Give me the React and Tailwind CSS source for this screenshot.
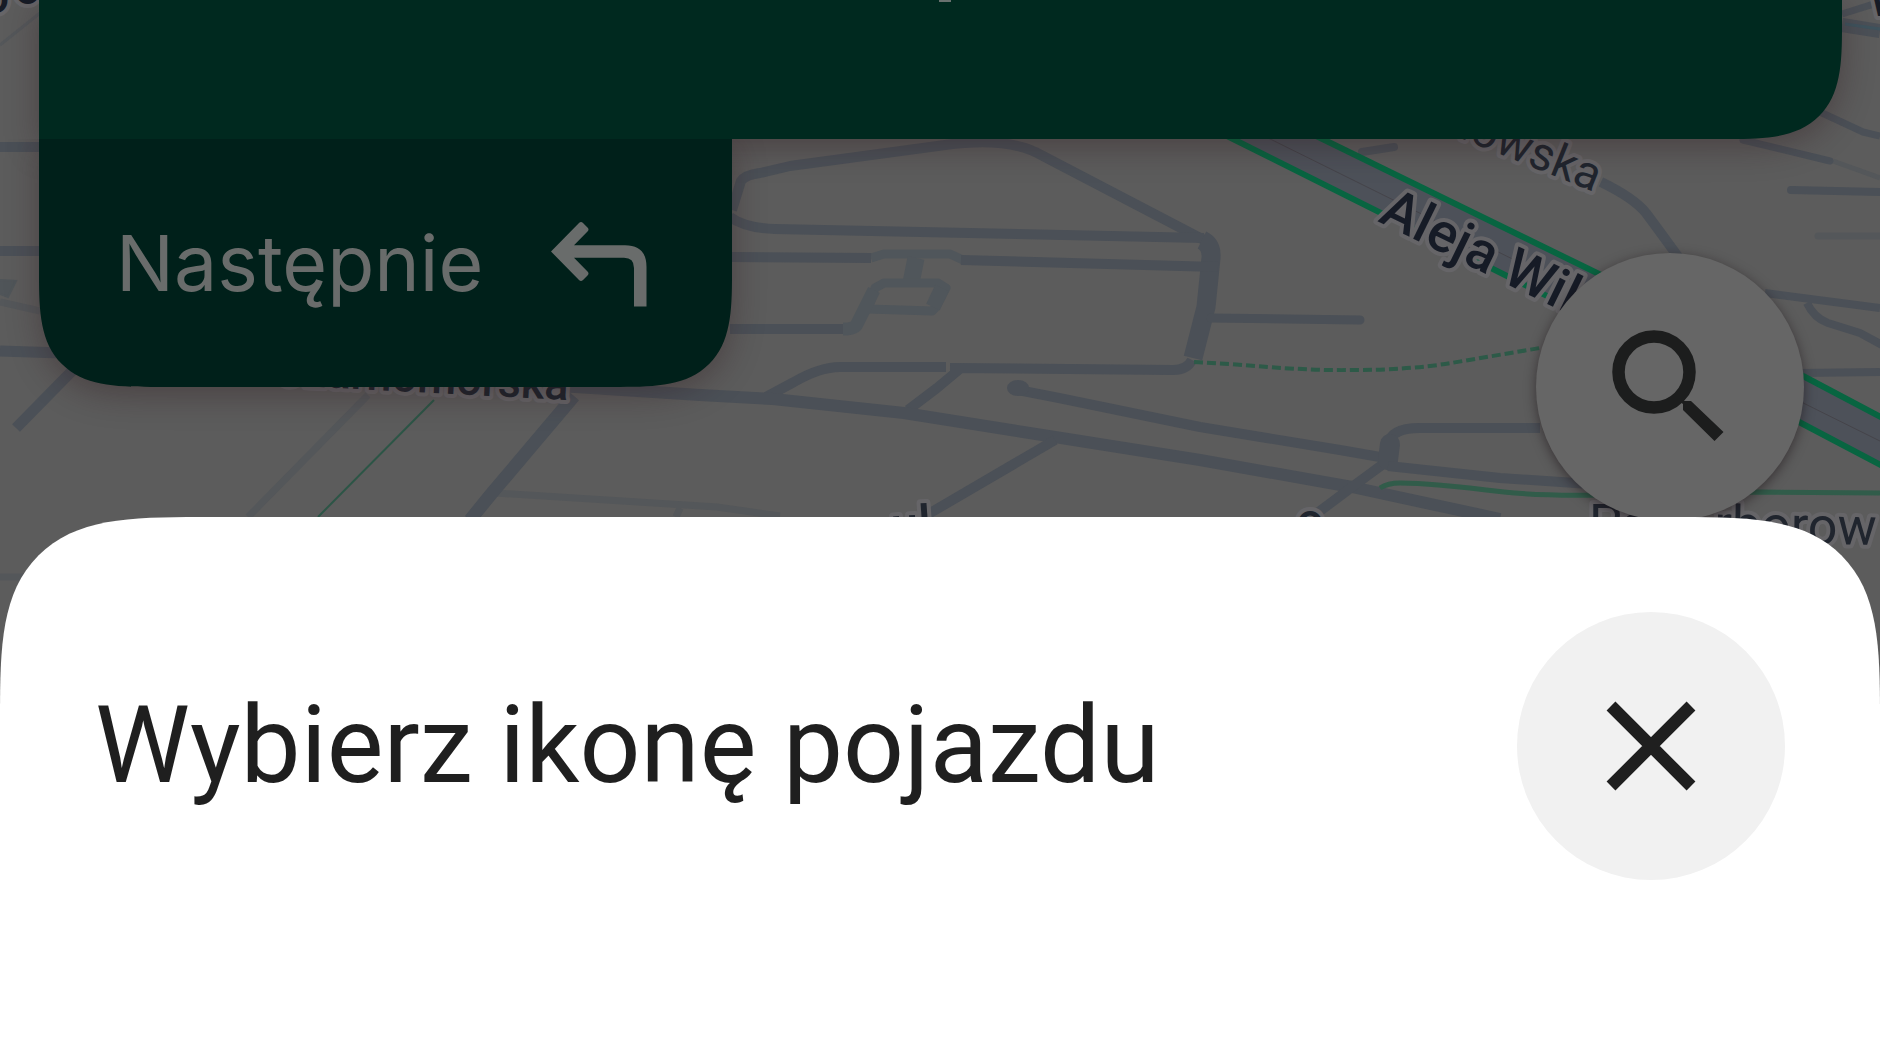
function MapBackground() {
  return (
    <svg
      className="absolute inset-0 w-full h-full"
      viewBox="0 0 1880 1058"
      preserveAspectRatio="xMidYMin slice"
      fill="none"
      aria-hidden="true"
    >
      {/* paths and minor streets */}
      <g stroke="#54575a" strokeWidth="7">
        <path d="M0 45 L40 13" strokeWidth="3" />
        <path d="M368 395 L248 517" />
        <path d="M495 493 L717 507 L780 516 M680 508 L676 517" />
        <path d="M0 577 H40" />
        <path d="M1833 161 L1880 178" strokeWidth="5" />
        <path d="M1818 236 H1880" strokeLinecap="round" />
        <path d="M0 302 L40 311" />
        <path d="M0 280 L16 281 L8 297 L0 294" fill="#505559" stroke="#505559" strokeWidth="2" />
      </g>

      <g stroke="#50565b" strokeWidth="9" strokeLinejoin="round">
        <path d="M871 258 L884 254 H950 L963 260" />
        <path d="M916 258 L911 283" strokeWidth="17" />
        <path d="M868 309 L875 288 L884 283 H938 L946 288 L936 307 L932 311 Z" />
        <path d="M942 288 L933 307" strokeWidth="15" />
        <path d="M874 290 L857 324 Q855 329 843 329" strokeWidth="13" />
      </g>

      {/* streets */}
      <g stroke="#4b5057" strokeWidth="10" strokeLinejoin="round">
        <path d="M0 147 H40 M0 251 H40" />
        <path d="M0 351 L62 353" strokeWidth="11" />
        <path d="M72 371 L16 428" strokeWidth="11" />
        <path d="M574 396 L492 493 L470 520" strokeWidth="13" />
        <path d="M732 210 L741 181 Q745 175 760 173 L790 166 L945 145 Q1010 136 1043 156 L1204 240" />
        <path d="M730 217 Q745 228 775 229 L1204 238" />
        <path d="M1202 240 Q1212 245 1211 258 L1206 307 L1193 358" strokeWidth="19" />
        <path d="M730 257 L871 258 M961 260 L1218 267" />
        <path d="M730 329 H843" />
        <path d="M766 397 L794 382 Q820 367 840 367 H946" />
        <path d="M950 368 L1173 370 Q1187 370 1192 360 M961 368 L937 388 L908 410" />
        <path d="M560 386 L700 395 L773 399 L904 413 L1055 437 L1200 460 L1352 487 L1500 519" strokeWidth="12" />
        <path d="M1018 390 L1059 398 L1200 427 L1340 450 L1380 457" />
        <ellipse cx="1018" cy="388" rx="11" ry="8" fill="#4b5057" stroke="none" />
        <path d="M1055 440 L925 516" />
        <path d="M1211 318 L1360 320" strokeWidth="9" strokeLinecap="round" />
        <path d="M1540 428 H1420 Q1390 428 1388 445 L1386 462 L1352 487 L1312 517" />
        <path d="M1390 444 L1388 460" strokeWidth="20" strokeLinecap="round" />
        <path d="M1388 466 L1500 478 L1590 484" />
        <path d="M1601 182 Q1634 198 1646 213 Q1655 225 1679 258" />
        <path d="M1362 152 L1394 147" strokeWidth="8" strokeLinecap="round" />
        <path d="M1743 140 L1830 161" strokeWidth="7" strokeLinecap="round" />
        <path d="M1820 112 L1863 132 L1880 136" strokeWidth="7" />
        <path d="M1791 190 L1880 192" strokeWidth="8" strokeLinecap="round" />
        <path d="M1842 25 L1880 31" strokeWidth="14" />
        <path d="M1842 14 L1880 2" strokeWidth="7" />
        <path d="M1765 293 L1880 308 M1807 303 Q1814 318 1828 323 L1860 333 L1884 346" strokeWidth="8" />
        <path d="M1800 373 L1880 372" strokeWidth="8" />
      </g>
      <path d="M1845 24 L1880 29" stroke="#3f535d" strokeWidth="3" />

      {/* Aleja Wilanowska */}
      <path d="M1210 129 L1299 129 L1597 273 L1805 377 L1890 420 L1890 470 L1801 423 L1519 282 Z" fill="#4d5159" />
      <path d="M1250 129 L1890 446" stroke="#45444a" strokeWidth="1" />
      <g stroke="#086541" strokeWidth="6">
        <path d="M1213 129 L1519 282 L1801 423 L1890 470" />
        <path d="M1302 129 L1597 273 L1805 377 L1890 422" />
      </g>

      {/* cycle and foot paths */}
      <path d="M434 400 L318 517" stroke="#2c5546" strokeWidth="2" />
      <path
        d="M1380 488 Q1388 483 1400 483 Q1430 483 1504 492 Q1540 496 1600 495 L1759 492 L1880 493"
        stroke="#315c4a"
        strokeWidth="5"
      />
      <path
        d="M1194 362 L1230 364 Q1310 371 1352 370 Q1410 370 1451 363 L1540 348"
        stroke="#2d5a48"
        strokeWidth="4"
        strokeDasharray="9 4"
      />

      <g
        className="font-[Roboto,sans-serif]"
        fill="#20252e"
        stroke="#666568"
        strokeWidth="8"
        strokeLinejoin="round"
        paintOrder="stroke"
      >
        <text x="568" y="400" fontSize="45" fontWeight="500" textAnchor="end" transform="rotate(3 568 400)">
          Czarnomorska
        </text>
        <text x="1594" y="192" fontSize="47" textAnchor="end" transform="rotate(22 1594 192)">
          Wilanowska
        </text>
        <text x="1377" y="221" fontSize="55" fontWeight="500" fill="#161b26" transform="rotate(26 1377 221)">
          Aleja Wilanowska
        </text>
        <text x="1589" y="541" fontSize="52">Pa</text>
        <text x="1714" y="542" fontSize="52" transform="rotate(1 1714 542)">rborow</text>
        <text x="892" y="543" fontSize="50" fontWeight="500" transform="rotate(-4 892 543)">ul</text>
        <text x="1310" y="537" fontSize="48" fontWeight="500" textAnchor="middle">o</text>
        <text x="-18" y="13" fontSize="48" fontWeight="500" fill="#161b26">o</text>
        <text x="14" y="4" fontSize="48" fontWeight="500" fill="#161b26">o</text>
        <text x="1869" y="16" fontSize="48" fontWeight="500" fill="#161b26">W</text>
      </g>
    </svg>
  );
}

function TurnLeftIcon() {
  return (
    <svg className="w-24 h-[88px]" viewBox="551 219 96 88" fill="#696c6b" aria-hidden="true">
      <path d="M551 251.500 L579 223 Q581 221 583 223 L587.500 227.500 Q589.500 229.500 587.500 231.500 L574 245.200 H625 Q646.500 245.200 646.500 267 V306.500 H634 V268 Q634 257.800 624 257.800 H574 L587.500 271.500 Q589.500 273.500 587.500 275.500 L583 280 Q581 282 579 280 Z" />
    </svg>
  );
}

function SearchIcon() {
  return (
    <svg className="w-[116px] h-[116px]" viewBox="-2 -2 116 116" fill="none" stroke="#1c1d1d" aria-hidden="true">
      <circle cx="40" cy="41" r="35.500" strokeWidth="12.500" />
      <path d="M67 69 L70 70 L77 70 L109.500 101 L100.500 110 L69 79 V73 L65 70 Z" fill="#1c1d1d" stroke="none" />
    </svg>
  );
}

function CloseIcon() {
  return (
    <svg className="w-[90px] h-[90px]" viewBox="0 0 90 90" stroke="#1f1f1f" strokeWidth="12.500" aria-hidden="true">
      <path d="M5 5 L85 85 M85 5 L5 85" />
    </svg>
  );
}

function App() {
  return (
    <div className="relative min-h-screen flex flex-col overflow-hidden bg-[#5c5c5c]">
      <MapBackground />

      <header className="relative ml-[39px] mr-[38px] h-[139px] flex justify-center bg-[#00291f] rounded-br-[112px] [corner-shape:superellipse(1.6)] shadow-[0_8px_32px_rgba(40,16,20,0.35)]">
        <div className="w-3 h-[2px] ml-2 bg-[#69716f]" />
      </header>

      <div className="relative flex items-start justify-between pl-[39px] pr-[76px]">
        {/* the shadow is clipped at the top so it stays off the header */}
        <div className="[clip-path:inset(0_-60px_-60px_-60px)] h-[248px] pl-[77px] pr-[85px] flex items-center gap-[68px] bg-[#00201a] rounded-b-[112px] [corner-shape:superellipse(1.6)] shadow-[0_8px_32px_rgba(40,16,20,0.35)]">
          <span className="font-[Inter,sans-serif] text-[77px] leading-[96px] text-[#696c6b]">
            Następnie
          </span>
          <TurnLeftIcon />
        </div>

        <button
          type="button"
          aria-label="Szukaj"
          className="mt-[114px] w-[268px] h-[268px] rounded-full bg-[#666666] flex items-center justify-center shadow-[0_3px_12px_rgba(20,10,14,0.5)]"
        >
          <SearchIcon />
        </button>
      </div>

      <section
        role="dialog"
        aria-labelledby="sheet-title"
        className="relative -mt-1 flex-1 bg-white rounded-t-[200px] [corner-shape:superellipse(1.7)] pt-[95px] px-[95px]"
      >
        <div className="flex items-center justify-between">
          <h1 id="sheet-title" className="font-[Roboto,sans-serif] text-[107px] leading-[128px] text-[#1f1f1f]">
            Wybierz ikonę pojazdu
          </h1>
          <button
            type="button"
            aria-label="Zamknij"
            className="w-[268px] h-[268px] shrink-0 rounded-full bg-[#f1f1f1] flex items-center justify-center"
          >
            <CloseIcon />
          </button>
        </div>
      </section>
    </div>
  );
}

export default App;
